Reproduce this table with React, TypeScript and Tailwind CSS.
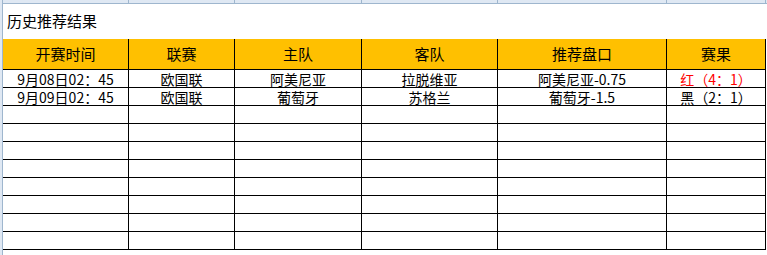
const columns = ["开赛时间", "联赛", "主队", "客队", "推荐盘口", "赛果"];
const widths = ["w-[126px]", "w-[106px]", "w-[127px]", "w-[136px]", "w-[169px]", "w-[99px]"];

const rows = [
  { time: "9月08日02：45", league: "欧国联", home: "阿美尼亚", away: "拉脱维亚", pick: "阿美尼亚-0.75", result: "红（4：1）", win: true },
  { time: "9月09日02：45", league: "欧国联", home: "葡萄牙", away: "苏格兰", pick: "葡萄牙-1.5", result: "黑（2：1）", win: false },
];

const emptyRows = 8;

export default function App() {
  return (
    <div
      className="flex w-[767px] h-[255px] overflow-hidden bg-white text-black text-[14px]"
      style={{ fontFamily: '"Noto Sans CJK SC", "Liberation Sans", sans-serif' }}
    >
      {/* row header edge */}
      <div className="w-[3px] shrink-0 bg-[#dfe8f3] border-r border-[#9eb6ce]" />

      <div className="flex flex-col flex-1">
        {/* column header edge */}
        <div className="flex h-[4px] shrink-0 bg-[#dfe8f3] border-b border-[#9eb6ce]">
          {widths.map((w, i) => (
            <div key={i} className={`${w} shrink-0 border-r border-[#9eb6ce]`} />
          ))}
        </div>

        <div className="h-[35px] shrink-0 flex items-center pl-[4px] text-[15px]">历史推荐结果</div>

        {/* header */}
        <div className="flex h-[31px] shrink-0">
          {columns.map((c, i) => (
            <div
              key={c}
              className={`${widths[i]} shrink-0 flex items-center justify-center bg-[#ffc000] border-r border-b border-black text-[15px]`}
            >
              {c}
            </div>
          ))}
        </div>

        {rows.map((r) => (
          <div key={r.time} className="flex h-[18px] shrink-0">
            {[r.time, r.league, r.home, r.away, r.pick, r.result].map((v, i) => (
              <div
                key={i}
                className={`${widths[i]} shrink-0 flex items-center justify-center border-r border-b border-black overflow-hidden`}
              >
                <span className={`leading-[16px] ${i === 5 && r.win ? "text-[#ff0000]" : ""}`}>{v}</span>
              </div>
            ))}
          </div>
        ))}

        {Array.from({ length: emptyRows }).map((_, k) => (
          <div key={k} className="flex h-[18px] shrink-0">
            {widths.map((w, i) => (
              <div key={i} className={`${w} shrink-0 border-r border-b border-black`} />
            ))}
          </div>
        ))}
      </div>
    </div>
  );
}
